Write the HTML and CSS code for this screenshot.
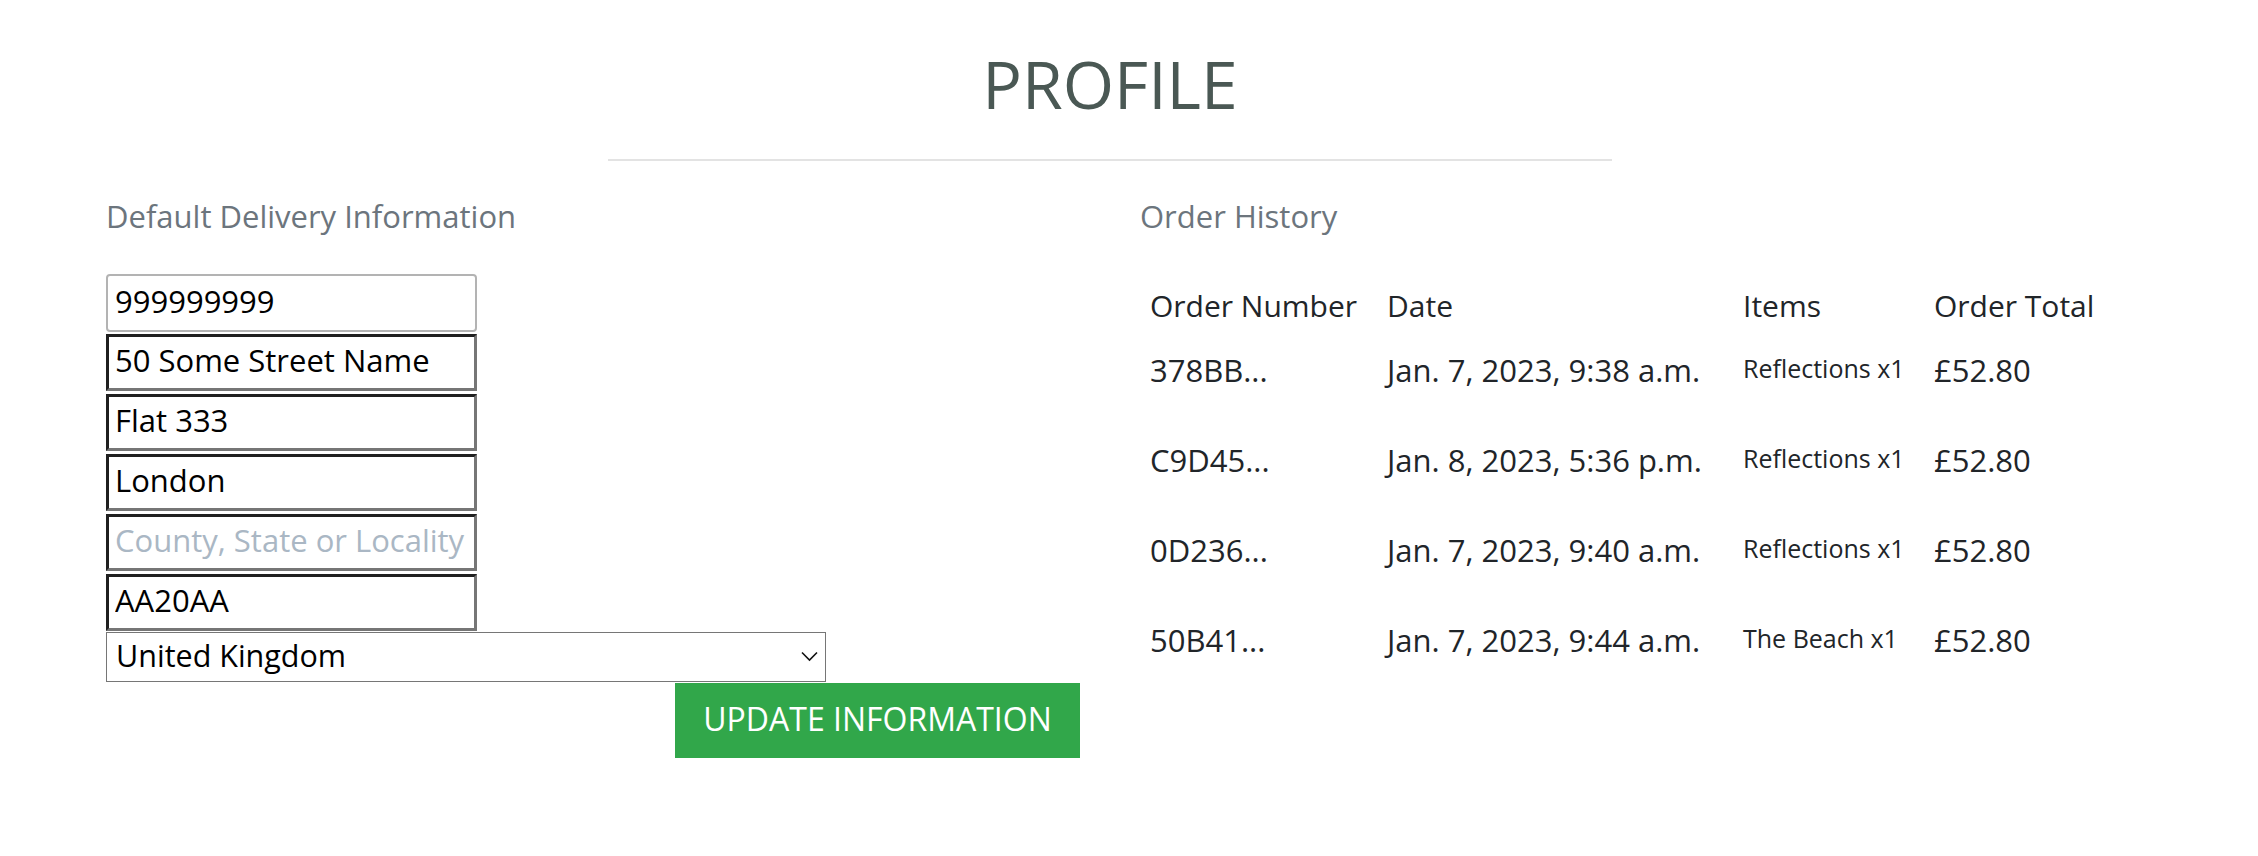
FILE: index.html
```html
<!DOCTYPE html>
<html lang="en">
<head>
<meta charset="utf-8">
<title>Profile</title>
<link rel="stylesheet" href="styles.css">
</head>
<body>
<div class="page">
  <h1 class="page-title">PROFILE</h1>
  <hr class="divider">
  <div class="columns">
    <div class="col col-left">
      <p class="section-title">Default Delivery Information</p>
      <form class="delivery-form">
        <input class="field field-phone" type="text" value="999999999">
        <input class="field field-inset" type="text" value="50 Some Street Name">
        <input class="field field-inset" type="text" value="Flat 333">
        <input class="field field-inset" type="text" value="London">
        <input class="field field-inset" type="text" placeholder="County, State or Locality">
        <input class="field field-inset field-last" type="text" value="AA20AA">
        <div class="select-wrap">
          <select class="country">
            <option>United Kingdom</option>
          </select>
          <svg class="chevron" width="17" height="11" viewBox="0 0 17 11"><path d="M1 1.5 L8.5 9 L16 1.5" fill="none" stroke="#111" stroke-width="1.6"/></svg>
        </div>
        <button class="btn-update" type="button">UPDATE INFORMATION</button>
      </form>
    </div>
    <div class="col col-right">
      <p class="section-title">Order History</p>
      <table class="orders">
        <colgroup>
          <col class="c-num"><col class="c-date"><col class="c-items"><col class="c-total">
        </colgroup>
        <thead>
          <tr><th>Order Number</th><th>Date</th><th>Items</th><th>Order Total</th></tr>
        </thead>
        <tbody>
          <tr><td><a class="order-link" href="#">378BB...</a></td><td>Jan. 7, 2023, 9:38 a.m.</td><td class="items">Reflections x1</td><td>£52.80</td></tr>
          <tr><td><a class="order-link" href="#">C9D45...</a></td><td>Jan. 8, 2023, 5:36 p.m.</td><td class="items">Reflections x1</td><td>£52.80</td></tr>
          <tr><td><a class="order-link" href="#">0D236...</a></td><td>Jan. 7, 2023, 9:40 a.m.</td><td class="items">Reflections x1</td><td>£52.80</td></tr>
          <tr><td><a class="order-link" href="#">50B41...</a></td><td>Jan. 7, 2023, 9:44 a.m.</td><td class="items">The Beach x1</td><td>£52.80</td></tr>
        </tbody>
      </table>
    </div>
  </div>
</div>
</body>
</html>
```
FILE: styles.css
```css
* { box-sizing: border-box; }
html, body { margin: 0; padding: 0; background: #fff; }
body {
  font-family: "Open Sans", "Liberation Sans", sans-serif;
  color: #212529;
}
.page {
  width: 2008px;
  margin-left: 106px;
  padding-top: 43px;
  padding-bottom: 60px;
}
.page-title {
  margin: 0;
  font-size: 66px;
  line-height: 80px;
  font-weight: 400;
  text-align: center;
  color: #4a5854;
}
.divider {
  width: 1004px;
  height: 2px;
  border: 0;
  background: #e3e3e3;
  margin: 36px auto 37px;
}
.columns {
  display: grid;
  grid-template-columns: 1004px 1004px;
}
.col-left { padding-right: 30px; }
.col-right { padding-left: 30px; }
.section-title {
  margin: 0;
  font-size: 31px;
  line-height: 36px;
  color: #6c757d;
}
.delivery-form {
  display: flex;
  flex-direction: column;
  align-items: flex-start;
  margin-top: 40px;
}
.field {
  width: 371px;
  height: 57px;
  margin: 0 0 3px 0;
  font-family: inherit;
  font-size: 31px;
  color: #000;
  background: #fff;
  outline: none;
}
.field-phone {
  height: 58px;
  margin-bottom: 2px;
  border: 2px solid #b3b3b3;
  border-radius: 4px;
  padding: 0 7px 5px;
}
.field-inset {
  border-style: solid;
  border-width: 3px;
  border-color: #1f1f1f #767676 #767676 #1f1f1f;
  border-radius: 0;
  padding: 0 6px 5px;
}
.field-last { margin-bottom: 1px; }
.field::placeholder { color: #aab7c4; opacity: 1; }
.select-wrap {
  position: relative;
  width: 720px;
  height: 50px;
}
.country {
  appearance: none;
  -webkit-appearance: none;
  width: 720px;
  height: 50px;
  border: 1px solid #767676;
  border-radius: 0;
  background: #fff;
  font-family: inherit;
  font-size: 30.5px;
  color: #000;
  padding: 0 40px 4px 9px;
  outline: none;
}
.chevron {
  position: absolute;
  left: 695px;
  top: 19px;
  pointer-events: none;
}
.btn-update {
  align-self: flex-end;
  width: 405px;
  height: 75px;
  margin-top: 1px;
  border: 0;
  border-radius: 0;
  background: #31a74a;
  color: #fff;
  font-family: inherit;
  font-size: 32px;
  line-height: 40px;
  padding: 0 0 3px 0;
  cursor: pointer;
}
.orders {
  margin-top: 44px;
  border-collapse: collapse;
  table-layout: fixed;
  width: 970px;
  color: #212529;
}
.c-num { width: 237px; }
.c-date { width: 356px; }
.c-items { width: 191px; }
.c-total { width: 186px; }
.orders th {
  font-size: 30px;
  font-weight: 400;
  text-align: left;
  line-height: 40px;
  padding: 8px 0 9px 10px;
  white-space: nowrap;
}
.orders td {
  font-size: 31px;
  vertical-align: top;
  line-height: 40px;
  padding: 15px 0 35px 10px;
  white-space: nowrap;
}
.orders td.items {
  font-size: 25px;
  line-height: 36px;
}
.order-link { color: #212529; text-decoration: none; }
```
